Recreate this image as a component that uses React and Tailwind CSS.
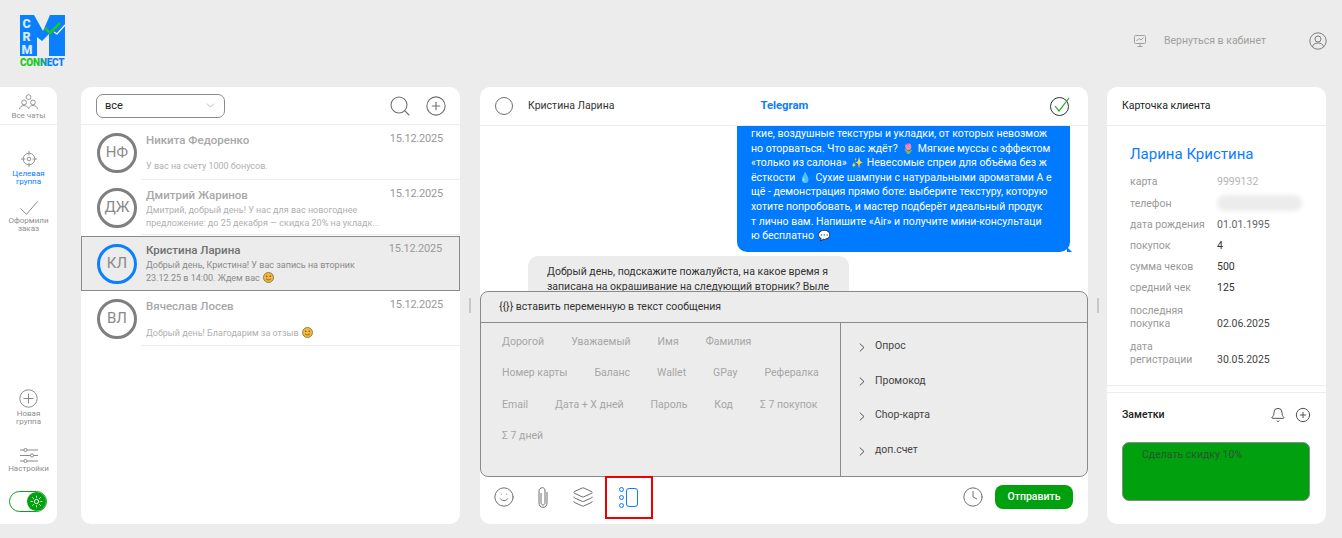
import { Search, ChevronDown, Smile, Layers, Clock, Bell, CirclePlus, Sun } from 'lucide-react';

// Логотип: буква M с колонкой CRM и галочкой
function Logo() {
    return (
        <div className="flex flex-col items-start w-[46px]">
            <svg width="45" height="42" viewBox="0 0 45 42">
                <path d="M0 0H14L23 16L30 0H45V41H29V19L22 26L17 22V41H0Z" fill="#0a80ff" />
                <text x="2.5" y="13" fontSize="12.5" fontWeight="900" fill="#d7e9ff" fontFamily="Roboto">C</text>
                <text x="2.5" y="26" fontSize="12.5" fontWeight="900" fill="#d7e9ff" fontFamily="Roboto">R</text>
                <text x="1.5" y="39" fontSize="12.5" fontWeight="900" fill="#d7e9ff" fontFamily="Roboto">M</text>
                <path d="M25 13L30 18L40 8" fill="none" stroke="#1ec81e" strokeWidth="2.6" />
                <path d="M34 17L37 19L45 10" fill="none" stroke="#ffffff" strokeWidth="1.2" />
            </svg>
            <div className="text-[10px] leading-[10px] font-black tracking-[-0.2px] whitespace-nowrap mt-[1px]">
                <span className="text-[#1ec81e]">CON</span>
                <span className="text-[#0fa08c]">N</span>
                <span className="text-[#0a80ff]">ECT</span>
            </div>
        </div>
    );
}

function GroupIcon() {
    return (
        <svg width="21" height="16" viewBox="0 0 22 18" fill="none" stroke="#8a8a8a" strokeWidth="1">
            <circle cx="11" cy="3.5" r="2.7" />
            <circle cx="6" cy="9.5" r="2.7" />
            <circle cx="16" cy="9.5" r="2.7" />
            <path d="M0.8 17C1.5 14 3.5 13 6 13C8 13 10 14 11 16.5C12 14 14 13 16 13C18.5 13 20.5 14 21.2 17" />
        </svg>
    );
}

function TargetIcon() {
    return (
        <svg width="18" height="18" viewBox="0 0 20 20" fill="none" stroke="#8a8a8a" strokeWidth="1">
            <circle cx="10" cy="10" r="6.5" />
            <circle cx="10" cy="10" r="2" />
            <path d="M10 1V6M10 14V19M1 10H6M14 10H19" />
        </svg>
    );
}

function CheckIcon() {
    return (
        <svg width="18" height="14" viewBox="0 0 18 14" fill="none" stroke="#8a8a8a" strokeWidth="1">
            <path d="M0.5 7.5L6.5 13.3L17.5 0.5" />
        </svg>
    );
}

function PlusIcon() {
    return (
        <svg width="19" height="19" viewBox="0 0 19 19" fill="none" stroke="#8a8a8a" strokeWidth="1">
            <circle cx="9.5" cy="9.5" r="8.7" />
            <path d="M9.5 4.5V14.5M4.5 9.5H14.5" />
        </svg>
    );
}

function SettingsIcon() {
    return (
        <svg width="18" height="16" viewBox="0 0 18 16" fill="none" stroke="#8a8a8a" strokeWidth="1">
            <path d="M0 3H4M7 3H18M0 8.5H10.5M13.5 8.5H18M0 14H4M7 14H18" />
            <circle cx="5.5" cy="3" r="1.6" />
            <circle cx="12" cy="8.5" r="1.6" />
            <circle cx="5.5" cy="14" r="1.6" />
        </svg>
    );
}

function SidebarItem({ icon, label, active }) {
    return (
        <div className="flex flex-col items-center">
            {icon}
            <div className={`text-[8px] leading-[8px] text-center mt-[2px] ${active ? 'text-[#0a7cff]' : 'text-[#8f8f8f]'}`}>
                {label}
            </div>
        </div>
    );
}

function Sidebar() {
    return (
        <div className="w-[57px] h-full bg-white rounded-r-[10px] flex flex-col">
            <div className="h-[38px] border-b border-[#ececec] flex justify-center pt-[7px]">
                <SidebarItem icon={<GroupIcon />} label="Все чаты" />
            </div>
            <div className="flex flex-col items-center gap-[15px] mt-[25px]">
                <SidebarItem icon={<TargetIcon />} label={<>Целевая<br />группа</>} active />
                <SidebarItem icon={<CheckIcon />} label={<>Оформили<br />заказ</>} />
            </div>
            <div className="mt-auto flex flex-col items-center pb-[12px]">
                <SidebarItem icon={<PlusIcon />} label={<>Новая<br />группа</>} />
                <div className="mt-[21px]">
                    <SidebarItem icon={<SettingsIcon />} label="Настройки" />
                </div>
                <div className="mt-[18px] -ml-[1px] w-[38px] h-[21px] rounded-full border border-[#0aa01a] flex justify-end items-center">
                    <div className="w-[19px] h-[19px] rounded-full bg-[#00a00f] flex items-center justify-center">
                        <Sun size={13} strokeWidth={1} color="#ffffff" absoluteStrokeWidth />
                    </div>
                </div>
            </div>
        </div>
    );
}

const chats = [
    { id: 'НФ', name: 'Никита Федоренко', lines: ['', 'У вас на счету 1000 бонусов.'], row: '', top: '' },
    { id: 'ДЖ', name: 'Дмитрий Жаринов', lines: ['Дмитрий, добрый день! У нас для вас новогоднее', 'предложение: до 25 декабря — скидка 20% на укладк...'], row: '', top: 'mt-[2px]' },
    { id: 'КЛ', name: 'Кристина Ларина', lines: ['Добрый день, Кристина! У вас запись на вторник', '23.12.25 в 14:00. Ждем вас'], smile: true, active: true, row: 'mt-[1px]', top: 'mt-[2px]' },
    { id: 'ВЛ', name: 'Вячеслав Лосев', lines: ['', 'Добрый день! Благодарим за отзыв'], smile: true, row: '', top: 'mt-[1px]' },
];

function SmileBadge() {
    return (
        <svg width="11" height="11" viewBox="0 0 11 11" className="inline-block ml-[3px] align-[-2px]">
            <circle cx="5.5" cy="5.5" r="5" fill="#f5b83d" stroke="#6b5a2a" strokeWidth="0.7" />
            <circle cx="3.8" cy="4.2" r="0.7" fill="#5a4a20" />
            <circle cx="7.2" cy="4.2" r="0.7" fill="#5a4a20" />
            <path d="M3 6.6C4 8.4 7 8.4 8 6.6" fill="none" stroke="#5a4a20" strokeWidth="0.7" />
        </svg>
    );
}

function ChatRow({ chat }) {
    return (
        <div className={`h-[55px] flex ${chat.row} ${chat.active ? 'bg-[#ececec] border border-[#8a8a8a] pl-[15px]' : 'pl-[16px]'}`}>
            <div className="shrink-0 self-center w-[40px] h-[40px]">
                <div className={`w-full h-full rounded-full border-[3px] flex items-center justify-center text-[15px] text-[#8a8a8a] ${chat.active ? 'border-[#0a80ff]' : 'border-[#7f7f7f]'}`}>
                    {chat.id}
                </div>
            </div>
            <div className={`flex-1 ml-[4px] pl-[5px] pr-[17px] flex flex-col ${chat.active ? 'pt-[6px]' : 'pt-[8px] border-b border-[#ececec]'}`}>
                <div className="flex justify-between">
                    <span className={`text-[11.5px] leading-[14px] font-medium ${chat.active ? 'text-[#707070]' : 'text-[#a8a8a8]'}`}>{chat.name}</span>
                    <span className="text-[11px] leading-[12px] tracking-[-0.2px] text-[#9a9a9a]">15.12.2025</span>
                </div>
                <div className={chat.top}>
                    {chat.lines.map((line, i) => (
                        <div key={i} className={`h-[13px] text-[9px] leading-[13px] whitespace-nowrap ${chat.active ? 'text-[#8a8a8a]' : 'text-[#b0b0b0]'}`}>
                            {line}
                            {chat.smile && i === 1 && <SmileBadge />}
                        </div>
                    ))}
                </div>
            </div>
        </div>
    );
}

function ChatList() {
    return (
        <div className="w-[379px] h-full bg-white rounded-[10px] overflow-hidden shrink-0">
            <div className="h-[38px] border-b border-[#ececec] flex items-center pl-[15px] pr-[13px]">
                <div className="w-[129px] h-[24px] border border-[#8a8a8a] rounded-[7px] flex items-center justify-between pl-[8px] pr-[7px] text-[11px] text-[#222]">
                    <span className="pt-[1px]">все</span>
                    <ChevronDown size={13} strokeWidth={1} color="#bdbdbd" absoluteStrokeWidth />
                </div>
                <Search size={24} strokeWidth={1.1} color="#707070" absoluteStrokeWidth className="ml-auto" />
                <CirclePlus size={22} strokeWidth={1.1} color="#707070" absoluteStrokeWidth className="ml-[13px]" />
            </div>
            {chats.map((chat) => (
                <ChatRow key={chat.id} chat={chat} />
            ))}
        </div>
    );
}

// Эмодзи в сообщении с фиксированной шириной
function Emo({ children }) {
    return <span className="inline-block w-[15px] text-[10px] text-center">{children}</span>;
}

const blueLines = [
    <>гкие, воздушные текстуры и укладки, от которых невозмож</>,
    <>но оторваться. Что вас ждёт? <Emo>🌷</Emo> Мягкие муссы с эффектом</>,
    <>«только из салона» <Emo>✨</Emo> Невесомые спреи для объёма без ж</>,
    <>ёсткости <Emo>💧</Emo> Сухие шампуни с натуральными ароматами А е</>,
    <>щё - демонстрация прямо боте: выберите текстуру, которую</>,
    <>хотите попробовать, и мастер подберёт идеальный продук</>,
    <>т лично вам. Напишите «Air» и получите мини-консультаци</>,
    <>ю бесплатно <Emo>💬</Emo></>,
];

const variables = ['Дорогой', 'Уважаемый', 'Имя', 'Фамилия', 'Номер карты', 'Баланс', 'Wallet', 'GPay', 'Рефералка', 'Email', 'Дата + X дней', 'Пароль', 'Код', 'Σ 7 покупок', 'Σ 7 дней'];
const extras = ['Опрос', 'Промокод', 'Chop-карта', 'доп.счет'];

function Chat() {
    return (
        <div className="flex-1 h-full bg-white rounded-[10px] overflow-hidden flex flex-col">
            <div className="h-[39px] shrink-0 border-b border-[#ececec] flex items-center pl-[15px] pr-[17px]">
                <div className="w-[18px] h-[18px] rounded-full border border-[#6f6f6f]" />
                <span className="ml-[15px] text-[10.5px] text-[#333]">Кристина Ларина</span>
                <span className="ml-[146px] text-[11.3px] font-bold text-[#0a7cff]">Telegram</span>
                <svg width="22" height="22" viewBox="0 0 22 22" fill="none" className="ml-auto">
                    <circle cx="10.5" cy="11.5" r="9" stroke="#333" strokeWidth="1" />
                    <path d="M6 11L10 16L20 3" stroke="#18a818" strokeWidth="1.2" />
                </svg>
            </div>
            <div className="flex-1 min-h-0 overflow-hidden flex flex-col">
                <div className="relative self-end mr-[18px] w-[333px] shrink-0 bg-[#007aff] text-white rounded-b-[10px] pl-[14px] pt-[1px] pb-[8px] text-[10.5px] leading-[14.6px] whitespace-nowrap">
                    {blueLines.map((line, i) => (
                        <div key={i} className="h-[14.6px]">{line}</div>
                    ))}
                    <svg width="5" height="5" viewBox="0 0 5 5" className="absolute -right-[2px] bottom-0">
                        <path d="M0 0L5 5H0Z" fill="#007aff" />
                    </svg>
                </div>
                <div className="ml-[48px] mt-[4px] w-[321px] shrink-0 bg-[#ececec] rounded-t-[10px] pl-[19px] pt-[8px] pb-[20px] text-[10.5px] leading-[15px] text-[#333] whitespace-nowrap">
                    <div>Добрый день, подскажите пожалуйста, на какое время я</div>
                    <div>записана на окрашивание на следующий вторник? Выле</div>
                </div>
            </div>
            <div className="h-[186px] shrink-0 bg-[#ececec] border border-[#8a8a8a] rounded-[8px] flex flex-col">
                <div className="h-[31px] shrink-0 border-b border-[#8a8a8a] flex items-center pl-[18px] text-[10.5px] text-[#333]">
                    {'{{}}'} вставить переменную в текст сообщения
                </div>
                <div className="flex-1 flex min-h-0">
                    <div className="w-[360px] border-r border-[#8a8a8a] pl-[21px] pr-[15px] pt-[12px] flex flex-wrap content-start gap-x-[27px] gap-y-[18.4px] text-[10.5px] leading-[13px] text-[#a6a6a6]">
                        {variables.map((v) => (
                            <span key={v}>{v}</span>
                        ))}
                    </div>
                    <div className="flex-1 flex flex-col pl-[18px] pt-[16px] gap-[20.7px] text-[10.5px] leading-[14px] text-[#444]">
                        {extras.map((e) => (
                            <div key={e} className="flex items-center gap-[10px]">
                                <svg width="6" height="9" viewBox="0 0 6 9" fill="none" stroke="#444" strokeWidth="0.9" className="mt-[2px]">
                                    <path d="M0.8 0.6L5 4.5L0.8 8.4" />
                                </svg>
                                {e}
                            </div>
                        ))}
                    </div>
                </div>
            </div>
            <div className="h-[47px] shrink-0 flex items-start pl-[13px] pr-[15px]">
                <Smile size={22} strokeWidth={1} color="#6f6f6f" absoluteStrokeWidth className="mt-[9px]" />
                <svg width="12" height="21" viewBox="0 0 12 21" fill="none" stroke="#6f6f6f" strokeWidth="1" className="mt-[10px] ml-[22px]">
                    <path d="M4 6V15.5C4 17 5 18 6 18C7 18 8 17 8 15.5V4C8 2 7 0.7 5.5 0.7C3.5 0.7 2 2 2 4V16C2 18.5 3.5 20.3 6 20.3C8.5 20.3 10 18.5 10 16V5" />
                </svg>
                <Layers size={22} strokeWidth={1} color="#6f6f6f" absoluteStrokeWidth className="mt-[9px] ml-[23px]" />
                <div className="-mt-[1px] ml-[11px] w-[48px] h-[43px] border-[2px] border-[#f00000] flex items-center justify-center gap-[2px] pr-[2px]">
                    <div className="flex flex-col gap-[3px]">
                        <div className="w-[5px] h-[5px] rounded-full border-[1.5px] border-[#0a7cff]" />
                        <div className="w-[5px] h-[5px] rounded-full border-[1.5px] border-[#0a7cff]" />
                        <div className="w-[5px] h-[5px] rounded-full border-[1.5px] border-[#0a7cff]" />
                    </div>
                    <div className="w-[12px] h-[19px] rounded-[3px] border-[1.5px] border-[#0a7cff]" />
                </div>
                <Clock size={22} strokeWidth={1} color="#6f6f6f" absoluteStrokeWidth className="mt-[9px] ml-auto" />
                <div className="ml-[11px] mt-[8px] w-[78px] h-[24px] rounded-[8px] bg-[#00a00f] text-white text-[10.5px] font-medium flex items-center justify-center">
                    Отправить
                </div>
            </div>
        </div>
    );
}

const clientRows = [
    { label: 'дата рождения', value: '01.01.1995', cls: 'text-[#666]' },
    { label: 'покупок', value: '4', cls: 'text-[#333]' },
    { label: 'сумма чеков', value: '500', cls: 'text-[#333]' },
    { label: 'средний чек', value: '125', cls: 'text-[#333]' },
];

function ClientCard() {
    return (
        <div className="w-[219px] h-full shrink-0 bg-white rounded-[10px] overflow-hidden flex flex-col">
            <div className="h-[39px] shrink-0 border-b border-[#ececec] flex items-center pl-[15px] text-[10.5px] text-[#222]">
                Карточка клиента
            </div>
            <div className="h-[260px] shrink-0 border-b border-[#ececec] pl-[23px] pt-[19px]">
                <div className="text-[15px] leading-[18px] text-[#0a7cff]">Ларина Кристина</div>
                <div className="mt-[8px] flex flex-col text-[10.5px] leading-[13px]">
                    <div className="flex h-[21px] items-center">
                        <span className="w-[87px] text-[#999]">карта</span>
                        <span className="text-[#b5b5b5]">9999132</span>
                    </div>
                    <div className="flex h-[22px] items-center">
                        <span className="w-[87px] text-[#999]">телефон</span>
                        <div className="w-[85px] h-[16px] rounded-full bg-[#ececec] blur-[2px]" />
                    </div>
                    {clientRows.map((row) => (
                        <div key={row.label} className="flex h-[21px] items-center">
                            <span className="w-[87px] text-[#999]">{row.label}</span>
                            <span className={row.cls}>{row.value}</span>
                        </div>
                    ))}
                    <div className="flex items-end mt-[6px]">
                        <span className="w-[87px] text-[#999]">последняя<br />покупка</span>
                        <span className="text-[#444]">02.06.2025</span>
                    </div>
                    <div className="flex items-end mt-[10px]">
                        <span className="w-[87px] text-[#999]">дата<br />регистрации</span>
                        <span className="text-[#444]">30.05.2025</span>
                    </div>
                </div>
            </div>
            <div className="mt-[6px] border-t border-[#ececec] flex-1 px-[15px]">
                <div className="flex items-center h-[43px]">
                    <span className="text-[10.5px] font-medium text-[#222]">Заметки</span>
                    <Bell size={16} strokeWidth={1} color="#555" absoluteStrokeWidth className="ml-auto" />
                    <CirclePlus size={16} strokeWidth={1} color="#555" absoluteStrokeWidth className="ml-[9px]" />
                </div>
                <div className="mt-[6px] w-[188px] h-[59px] rounded-[7px] bg-[#00a00f] border border-[#8a8a8a] pl-[19px] pt-[5px] text-[10.5px] leading-[14px] text-[#2a5530]">
                    Сделать скидку 10%
                </div>
            </div>
        </div>
    );
}

function Handle() {
    return <div className="w-[2px] h-[15px] bg-[#c8c8c8]" />;
}

export default function App() {
    return (
        <div className="w-[1342px] h-[538px] overflow-hidden bg-[#ececec] font-[Roboto,sans-serif] flex flex-col">
            <header className="h-[87px] shrink-0 flex items-start pl-[20px] pr-[15px]">
                <div className="pt-[15px]">
                    <Logo />
                </div>
                <div className="ml-auto flex items-center mt-[32px]">
                    <svg width="12" height="12" viewBox="0 0 12 12" fill="none" stroke="#a0a0a0" strokeWidth="1">
                        <rect x="0.5" y="0.5" width="11" height="8" rx="1" />
                        <path d="M6 9V11.5M3.5 11.5H8.5M2.5 6L5 3.5L7 5L9.5 2.5" />
                    </svg>
                    <span className="ml-[18px] text-[10.5px] text-[#9f9f9f]">Вернуться в кабинет</span>
                    <svg width="18" height="18" viewBox="0 0 18 18" fill="none" stroke="#7f7f7f" strokeWidth="1" className="ml-[43px]">
                        <circle cx="9" cy="9" r="8.2" />
                        <circle cx="9" cy="7" r="3" />
                        <path d="M3.5 15C4 12 6 11 9 11C12 11 14 12 14.5 15" />
                    </svg>
                </div>
            </header>
            <main className="h-[437px] shrink-0 flex">
                <Sidebar />
                <div className="w-[24px] shrink-0" />
                <ChatList />
                <div className="w-[20px] shrink-0 flex items-center justify-center">
                    <Handle />
                </div>
                <Chat />
                <div className="w-[19px] shrink-0 flex items-center justify-center">
                    <Handle />
                </div>
                <ClientCard />
                <div className="w-[16px] shrink-0" />
            </main>
        </div>
    );
}
